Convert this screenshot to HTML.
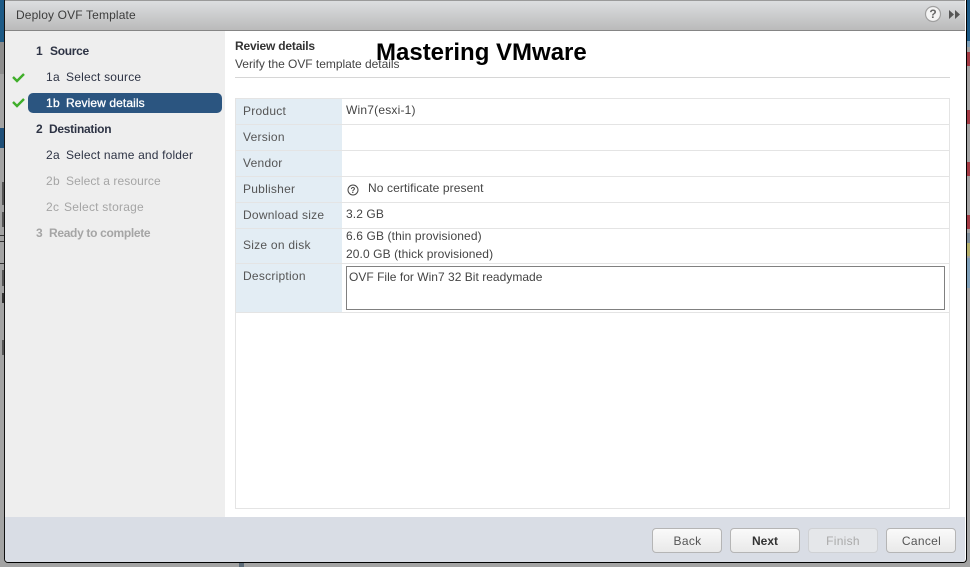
<!DOCTYPE html>
<html><head><meta charset="utf-8"><style>
html,body{margin:0;padding:0;width:970px;height:567px;overflow:hidden;background:#a3a3a3;font-family:"Liberation Sans",sans-serif;font-size:12px;color:#333}
div,span.a{position:absolute;white-space:nowrap}
.t{line-height:14px;height:14px}
.s{color:#2d3344}.g{color:#a5a5a5}.b{font-weight:bold}
.l{left:236px;width:106px;background:#e3edf4}
.h{left:236px;width:713px;height:1px;background:#e4e4e4}
.lab{left:243px;color:#555;letter-spacing:.25px}
.val{left:346px;color:#444;letter-spacing:.1px}
.btn{top:528px;height:23px;width:68px;border:1px solid #b5b5b5;border-radius:4px;background:linear-gradient(#fafafa,#e9e9e9);text-align:center;line-height:24px;color:#555;letter-spacing:.3px;text-indent:1px}
</style></head><body>
<div style="left:0;top:0;width:4px;height:42px;background:#1d5a86"></div>
<div style="left:0;top:42px;width:4px;height:32px;background:#8d8d8d"></div>
<div style="left:0;top:128px;width:4px;height:20px;background:#1e4f78"></div>
<div style="left:2px;top:182px;width:2px;height:23px;background:#555"></div>
<div style="left:2px;top:212px;width:2px;height:15px;background:#555"></div>
<div style="left:0;top:235px;width:4px;height:1px;background:#333"></div>
<div style="left:0;top:241px;width:4px;height:1px;background:#333"></div>
<div style="left:0;top:263px;width:4px;height:1px;background:#333"></div>
<div style="left:2px;top:270px;width:2px;height:16px;background:#555"></div>
<div style="left:2px;top:293px;width:2px;height:10px;background:#333"></div>
<div style="left:2px;top:340px;width:2px;height:15px;background:#555"></div>
<div style="left:966px;top:0;width:4px;height:41px;background:#1d5a86"></div>
<div style="left:966px;top:41px;width:4px;height:6px;background:#7e9fb8"></div>
<div style="left:966px;top:52px;width:4px;height:14px;background:#a33a44"></div>
<div style="left:966px;top:110px;width:4px;height:14px;background:#a33a44"></div>
<div style="left:966px;top:162px;width:4px;height:14px;background:#a33a44"></div>
<div style="left:966px;top:215px;width:4px;height:14px;background:#a33a44"></div>
<div style="left:966px;top:233px;width:4px;height:10px;background:#7c8b98"></div>
<div style="left:966px;top:243px;width:4px;height:13px;background:#b5b06c"></div>
<div style="left:966px;top:258px;width:4px;height:30px;background:#7e9fb8"></div>
<div style="left:239px;top:563px;width:5px;height:4px;background:#5c6b78"></div>
<div style="left:4px;top:0;width:961px;height:562px;border:1px solid #000;border-top:0;border-left:1px solid #111;border-radius:0 0 4px 4px;background:#fff;overflow:hidden"></div>
<div style="left:5px;top:0;width:960px;height:30px;border-top:1px solid #9a9a9a;background:linear-gradient(#dcdee0,#b9b9b9)"></div>
<div style="left:5px;top:30px;width:960px;height:1px;background:#858585"></div>
<div class="t" style="left:16px;top:8px;color:#3c3c3c;letter-spacing:.14px">Deploy OVF Template</div>
<svg style="position:absolute;left:923px;top:5px" width="20" height="18"><circle cx="10" cy="9" r="7.500" fill="#f4f4f4" stroke="#a0a0a0" stroke-width="1.200"/><text x="10" y="13" font-family="Liberation Sans" font-size="12" font-weight="bold" text-anchor="middle" fill="#666">?</text></svg>
<svg style="position:absolute;left:948px;top:9px" width="13" height="11"><path d="M1 1l5 4.500-5 4.500zM7 1l5 4.500-5 4.500z" fill="#555"/></svg>

<div style="left:5px;top:31px;width:220px;height:486px;background:#eee"></div>
<div style="left:28px;top:93px;width:194px;height:20px;background:#2b5580;border-radius:5px"></div>
<svg style="position:absolute;left:11px;top:70px" width="15" height="40"><path d="M2 7l4 4 7-7M2 32l4 4 7-7" fill="none" stroke="#3fae2a" stroke-width="2.400"/></svg>
<div class="t b s" style="left:36px;top:44px">1</div><div class="t b s" style="left:50px;top:44px;letter-spacing:-.3px">Source</div>
<div class="t s" style="left:46px;top:70px;letter-spacing:.3px">1a</div><div class="t s" style="left:66px;top:70px;letter-spacing:.2px">Select source</div>
<div class="t" style="left:46px;top:96px;color:#fff;letter-spacing:.3px;-webkit-text-stroke:.3px #fff">1b</div><div class="t" style="left:66px;top:96px;color:#fff;letter-spacing:.1px;-webkit-text-stroke:.3px #fff">Review details</div>
<div class="t b s" style="left:36px;top:122px">2</div><div class="t b s" style="left:49px;top:122px;letter-spacing:-.28px">Destination</div>
<div class="t s" style="left:46px;top:148px;letter-spacing:.3px">2a</div><div class="t s" style="left:66px;top:148px;letter-spacing:.17px">Select name and folder</div>
<div class="t g" style="left:46px;top:174px;letter-spacing:.3px">2b</div><div class="t g" style="left:66px;top:174px;letter-spacing:.08px">Select a resource</div>
<div class="t g" style="left:46px;top:200px;letter-spacing:.3px">2c</div><div class="t g" style="left:64px;top:200px;letter-spacing:.23px">Select storage</div>
<div class="t g b" style="left:36px;top:226px">3</div><div class="t g b" style="left:49px;top:226px;letter-spacing:-.32px">Ready to complete</div>

<div class="t b" style="left:235px;top:39px;letter-spacing:-.2px;color:#333">Review details</div>
<div class="t" style="left:235px;top:57px;letter-spacing:-.03px;color:#444">Verify the OVF template details</div>
<div class="t b" style="left:376px;top:39px;height:28px;line-height:28px;font-size:24px;color:#000">Mastering VMware</div>
<div style="left:235px;top:77px;width:715px;height:1px;background:#d6d6d6"></div>

<div style="left:235px;top:98px;width:713px;height:409px;border:1px solid #e4e4e4"></div>
<div class="l" style="top:99px;height:214px"></div>
<div class="h" style="top:124px"></div>
<div class="h" style="top:150px"></div>
<div class="h" style="top:176px"></div>
<div class="h" style="top:202px"></div>
<div class="h" style="top:228px"></div>
<div class="h" style="top:263px"></div>
<div class="h" style="top:312px"></div>
<div class="t lab" style="top:104px">Product</div>
<div class="t lab" style="top:130px">Version</div>
<div class="t lab" style="top:156px">Vendor</div>
<div class="t lab" style="top:182px">Publisher</div>
<div class="t lab" style="top:208px">Download size</div>
<div class="t lab" style="top:238px">Size on disk</div>
<div class="t lab" style="top:269px">Description</div>
<div class="t val" style="top:103px;letter-spacing:.2px">Win7(esxi-1)</div>
<svg style="position:absolute;left:347px;top:184px" width="12" height="12"><circle cx="6" cy="6" r="5" fill="#fff" stroke="#444"/><text x="6" y="9" font-family="Liberation Sans" font-size="8" font-weight="bold" text-anchor="middle" fill="#444">?</text></svg>
<div class="t val" style="left:368px;top:181px">No certificate present</div>
<div class="t val" style="top:207px">3.2 GB</div>
<div class="t val" style="top:229px;letter-spacing:.12px">6.6 GB (thin provisioned)</div>
<div class="t val" style="top:247px;letter-spacing:.09px">20.0 GB (thick provisioned)</div>
<div style="left:346px;top:266px;width:597px;height:42px;border:1px solid #808080;background:#fff"></div>
<div class="t val" style="left:349px;top:270px;letter-spacing:.02px">OVF File for Win7 32 Bit readymade</div>

<div style="left:5px;top:517px;width:960px;height:45px;background:#d9dde5;border-radius:0 0 3px 3px"></div>
<div class="btn" style="left:652px">Back</div>
<div class="btn b" style="left:730px;color:#333;letter-spacing:0;text-indent:0">Next</div>
<div class="btn" style="left:808px;color:#aaa;background:#e5e7ea;border-color:#cfd1d4;text-indent:0">Finish</div>
<div class="btn" style="left:886px">Cancel</div>
</body></html>
